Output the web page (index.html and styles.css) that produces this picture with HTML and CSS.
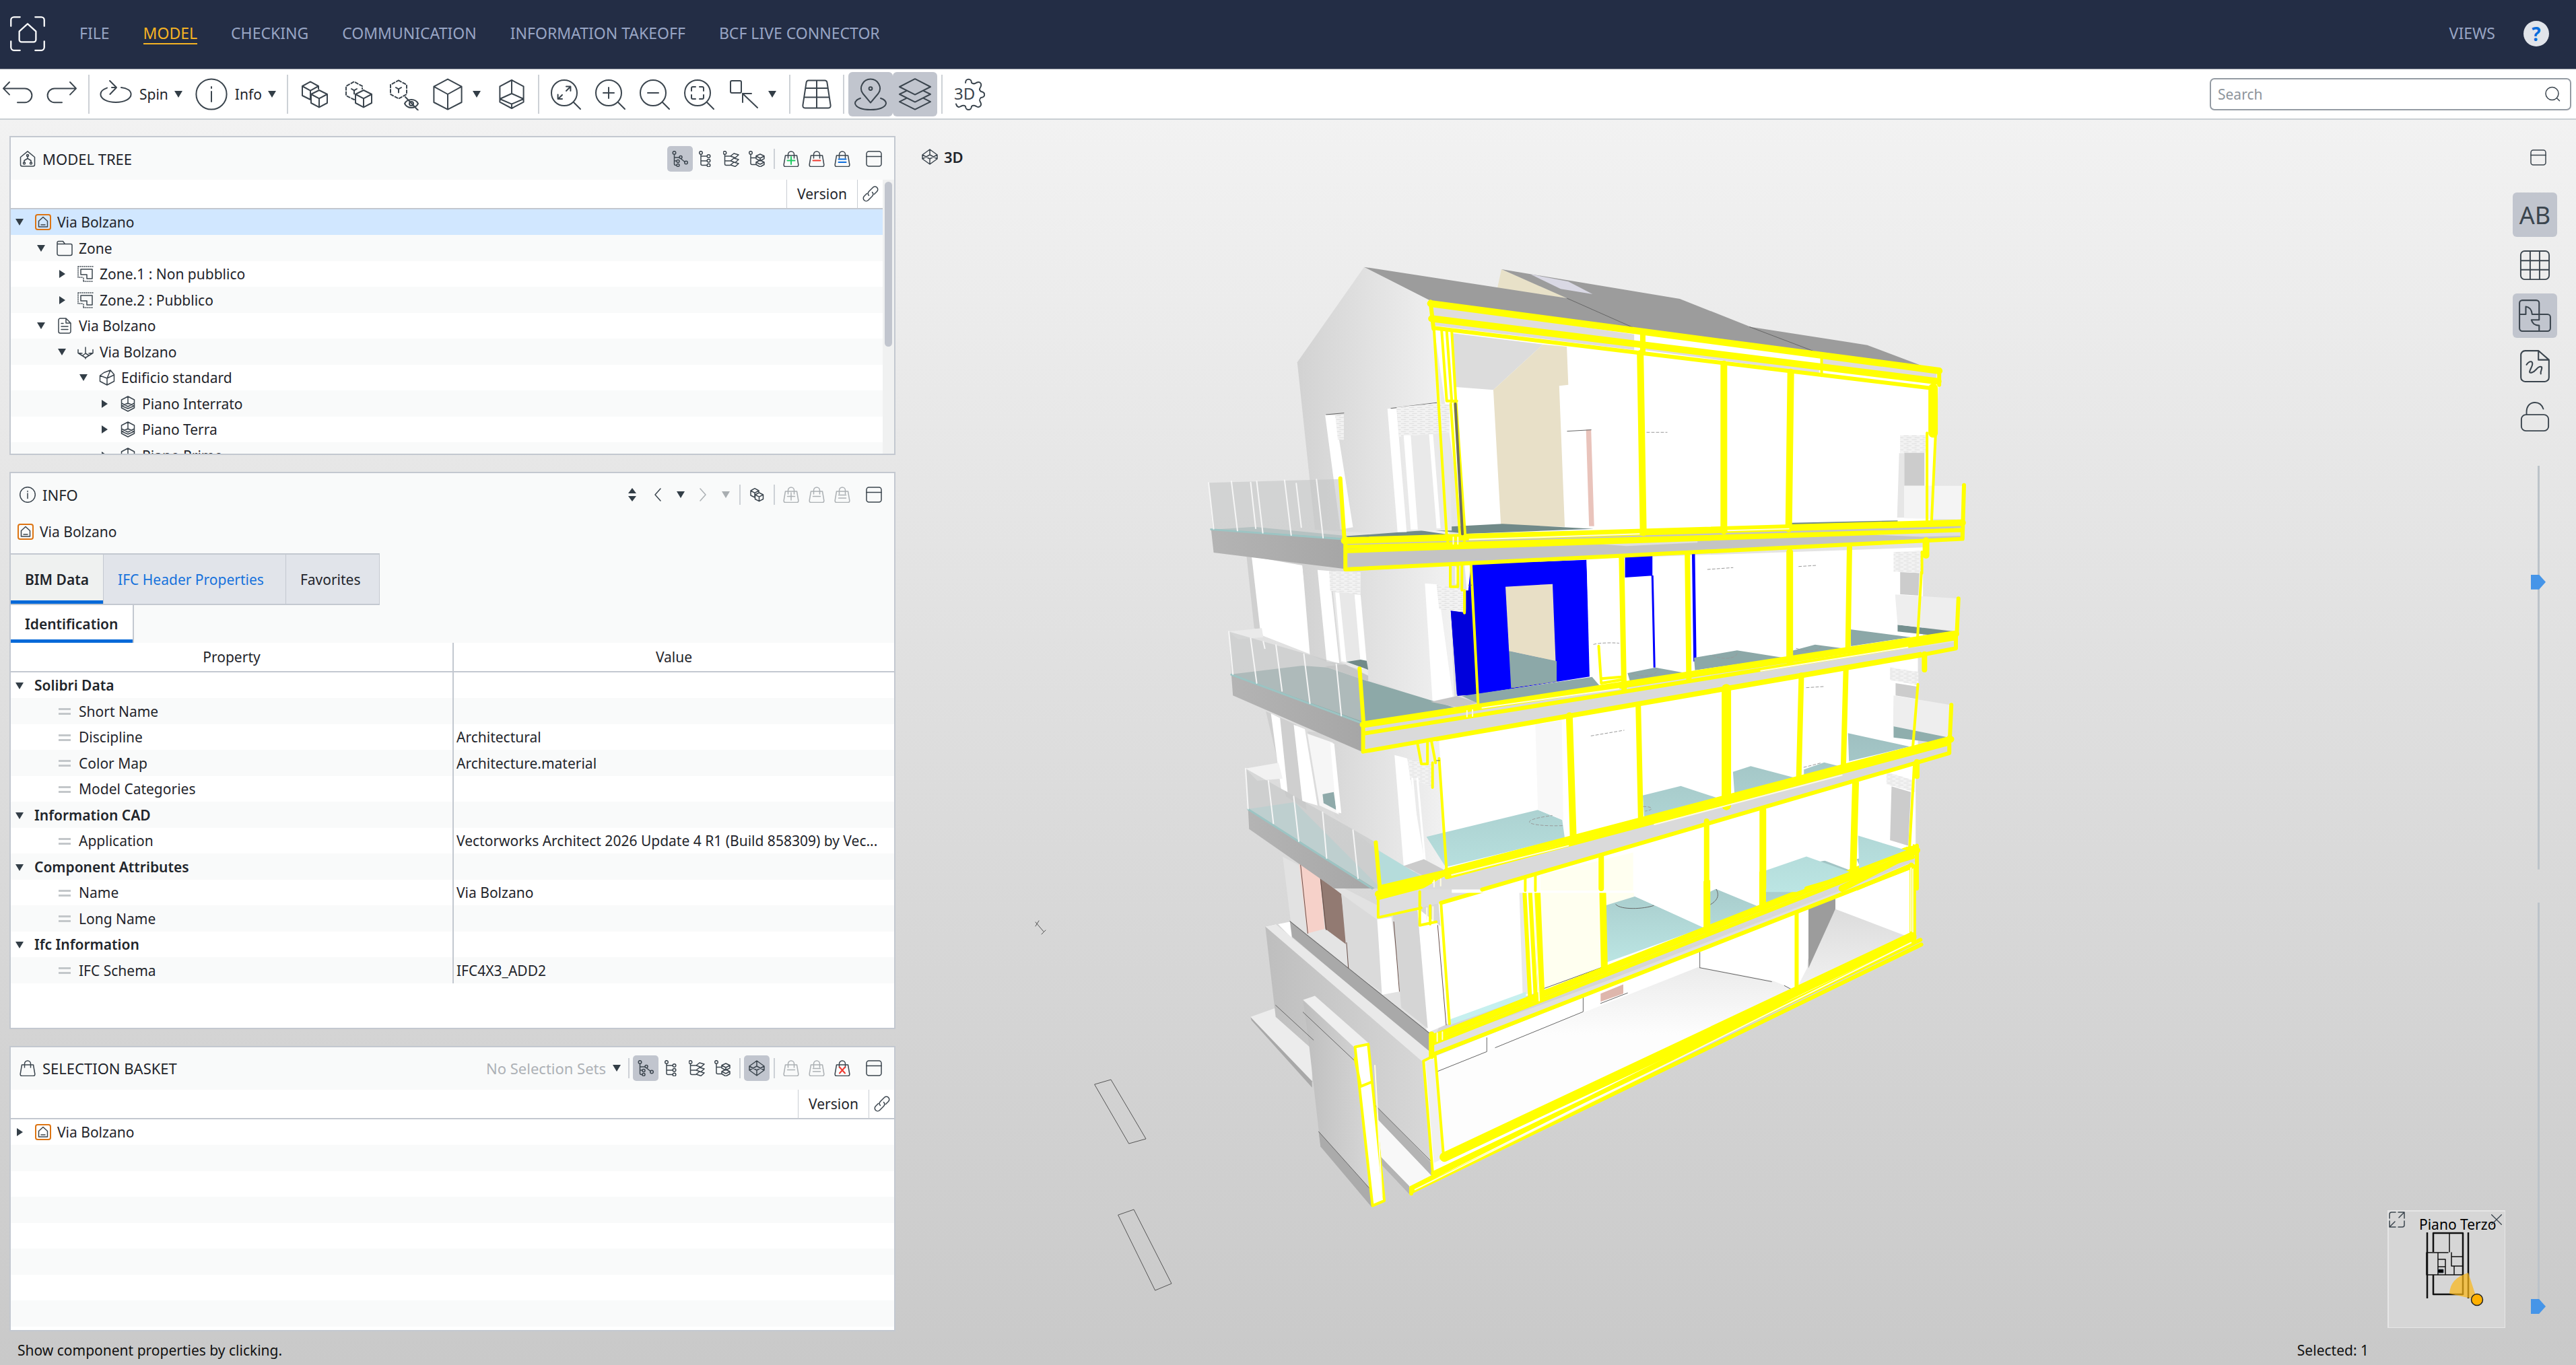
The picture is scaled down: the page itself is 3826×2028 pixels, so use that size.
FILE: index.html
```html
<!DOCTYPE html>
<html lang="en">
<head>
    <meta charset="UTF-8">
    <meta name="viewport" content="width=device-width, initial-scale=1.0">
    <title>Via Bolzano - Model</title>
    <link rel="stylesheet" href="styles.css">
</head>
<body>
    <svg class="sprite" aria-hidden="true">
        <symbol id="i-logo" viewBox="0 0 24 24"><path d="M1 7V3a2 2 0 0 1 2-2h4M17 1h4a2 2 0 0 1 2 2v4M23 17v4a2 2 0 0 1-2 2h-4M7 23H3a2 2 0 0 1-2-2v-4M6.500 10.500L12 5.500l5.500 5V16a1.500 1.500 0 0 1-1.500 1.500H8A1.500 1.500 0 0 1 6.500 16z"/></symbol>
        <symbol id="i-undo" viewBox="0 0 24 24"><path d="M6 3L1.500 7.700 6 12.300M1.500 7.700h16a5.200 5.200 0 0 1 0 10.400H12"/></symbol>
        <symbol id="i-redo" viewBox="0 0 24 24"><path d="M18 3l4.500 4.700L18 12.300M22.500 7.700h-16a5.200 5.200 0 0 0 0 10.400H12"/></symbol>
        <symbol id="i-spin" viewBox="0 0 24 24"><path d="M7.500 2l5 5-4.800 5M12.500 7H9M5.500 7.300C2.500 8.300.7 10 .7 12c0 3.500 5 6 11.300 6s11.300-2.500 11.300-6c0-2.700-3-4.600-7.300-5"/></symbol>
        <symbol id="i-info" viewBox="0 0 24 24"><circle cx="12" cy="12" r="11.300"/><path d="M12 10v7.500M12 6.500v1"/></symbol>
        <symbol id="i-cubes" viewBox="0 0 24 24"><path d="M9 12.500V16l-6-3V6l6-3.300L15 6v2M3 6l6 3.300L15 6M9 9.300v3M15.500 9l6 3v6.500l-6 3.200-6-3.200V12zM9.500 12l6 3.200 6-3.200M15.500 15.200v6.500"/></symbol>
        <symbol id="i-cubes-dash" viewBox="0 0 24 24"><path stroke-dasharray="2.200 1.400" d="M8.500 16l-6-3V6l6-3.300L14.500 6v2"/><path d="M6.500 8l2 1.200 2-1.200M8.500 9.200v2.500M15.500 9l6 3v6.500l-6 3.200-6-3.200V12zM9.500 12l6 3.200 6-3.200M15.500 15.200v6.500"/></symbol>
        <symbol id="i-cube-hide" viewBox="0 0 24 24"><path stroke-dasharray="2.200 1.400" d="M8.500 1.700l6 3.300v7l-6 3.300-6-3.300V5z"/><path d="M6.500 7l2 1.200 2-1.200M8.500 8.200v2.500M13 19c2-4 8-4 10 0-2 4-8 4-10 0zM13.500 14l9.500 10"/><circle cx="18" cy="19" r="1.500"/></symbol>
        <symbol id="i-cube" viewBox="0 0 24 24"><path d="M12 .8l10.300 5.500v11.700L12 23.300 1.700 18V6.300zM1.700 6.300L12 12l10.300-5.700M12 12v11.300"/></symbol>
        <symbol id="i-floor" viewBox="0 0 24 24"><path d="M12 1.500l8.800 4.700v11.600L12 22.500l-8.800-4.700V6.200zM12 1.500V11.500M3.200 15.500l8.800-4 8.800 4M3.200 15.500l8.800 3.800 8.800-3.800M12 19.300v3"/></symbol>
        <symbol id="i-zoom-fit" viewBox="0 0 24 24"><circle cx="11" cy="11" r="9.500"/><path d="M18 18l5 5M12.500 9.500L15.500 6.500M12.500 6.300h3.200v3.200M9.500 12.500l-3 3M6.300 12.300v3.200h3.200"/></symbol>
        <symbol id="i-zoom-in" viewBox="0 0 24 24"><circle cx="11" cy="11" r="9.500"/><path d="M18 18l5 5M11 7v8M7 11h8"/></symbol>
        <symbol id="i-zoom-out" viewBox="0 0 24 24"><circle cx="11" cy="11" r="9.500"/><path d="M18 18l5 5M7 11h8"/></symbol>
        <symbol id="i-zoom-area" viewBox="0 0 24 24"><circle cx="11" cy="11" r="9.500"/><path d="M18 18l5 5M6.500 9.500v-2a1 1 0 0 1 1-1h2M12.500 6.500h2a1 1 0 0 1 1 1v2M15.500 12.500v2a1 1 0 0 1-1 1h-2M9.500 15.500h-2a1 1 0 0 1-1-1v-2"/></symbol>
        <symbol id="i-select" viewBox="0 0 24 24"><rect x="2.500" y="2" width="8" height="9" rx="1"/><path d="M22.500 22L11.500 11.500M11.500 18v-6.500H18"/></symbol>
        <symbol id="i-grid3d" viewBox="0 0 24 24"><path d="M6 1.800h12q1.400 0 1.700 1.400l2.600 17q.2 2-1.600 2H3.300q-1.800 0-1.600-2l2.600-17Q4.600 1.800 6 1.800zM12 1.800v20.400M3.800 7.500h16.400M2.800 14.200h18.400"/></symbol>
        <symbol id="i-pin" viewBox="0 0 24 24"><path d="M12 18.300L6.300 11.500C3 7 6.500.8 12 .8S21 7 17.700 11.500zM4.500 15C1.500 16 .5 17.200.5 18.800 1 22 6 23.500 12 23.500S23 22 23.500 18.800c0-1.600-1-2.800-4-3.800"/><circle cx="12" cy="7.800" r="1.200"/></symbol>
        <symbol id="i-layers" viewBox="0 0 24 24"><path d="M12 .6l11.500 5.900L12 12.300.5 6.500zM6 9.300L.5 12 12 17.800 23.500 12 18 9.300M6 14.800L.5 17.600 12 23.300l11.500-5.700-5.500-2.800"/></symbol>
        <symbol id="i-search" viewBox="0 0 24 24"><circle cx="11.500" cy="11" r="9.500"/><path d="M18.500 17.800l4 4"/></symbol>
        <symbol id="i-window" viewBox="0 0 24 24"><rect x="1" y="1" width="22" height="22" rx="3.500"/><path d="M1 8.500h22"/></symbol>
        <symbol id="i-house-tree" viewBox="0 0 24 24"><path d="M12 .8L22.500 9.500v11a2.500 2.500 0 0 1-2.500 2.500H4a2.500 2.500 0 0 1-2.500-2.500v-11zM12 8v3.500M12 11.500l-5 3v3M12 11.500l5 3v3"/><circle cx="12" cy="7" r="1.500"/><circle cx="7" cy="18.500" r="1.500"/><circle cx="17" cy="18.500" r="1.500"/></symbol>
        <symbol id="i-tree1" viewBox="0 0 24 24"><circle cx="3.500" cy="3" r="2.300"/><path d="M3.500 5.500v14a2 2 0 0 0 2 2h1M3.500 10h7.500M3.500 15h3M13 11.500l6 5"/><circle cx="13" cy="9.500" r="2"/><circle cx="9" cy="15.500" r="2"/><circle cx="21" cy="17.500" r="2.300"/><circle cx="9" cy="21.500" r="2"/></symbol>
        <symbol id="i-tree2" viewBox="0 0 24 24"><circle cx="5" cy="3" r="2.300"/><path d="M5 5.500v14a2 2 0 0 0 2 2h7M5 8h9M5 15h9"/><circle cx="16.500" cy="8" r="2.300"/><circle cx="16.500" cy="14.800" r="2.300"/><circle cx="16.500" cy="21.500" r="2.300"/></symbol>
        <symbol id="i-tree3" viewBox="0 0 24 24"><circle cx="2.500" cy="3" r="2.300"/><path d="M2.500 5.500v14a2 2 0 0 0 2 2h6M2.500 8h8M2.500 15h8M11 8l5-4 7 2-5 4.500zM11 15l5-4 7 2-5 4.500zM11 21l5-4 7 2-5 4.500z"/></symbol>
        <symbol id="i-tree4" viewBox="0 0 24 24"><circle cx="3" cy="3" r="2.300"/><path d="M3 5.500v13a2 2 0 0 0 2 2h6M3 10.500h8M17 5l6 2.800v4L17 15l-6-3.200v-4zM11 8l6 3 6-3M17 11v4M17 14l6 3v3.500L17 24l-6-3.500V17zM11 17l6 3 6-3"/></symbol>
        <symbol id="i-bag" viewBox="0 0 24 24"><path d="M3.500 7h17l2.300 13.500q.2 3-2.300 3h-17q-2.500 0-2.300-3zM7.500 11V5.500a4.500 4.500 0 0 1 9 0V11"/></symbol>
        <symbol id="i-house" viewBox="0 0 24 24"><rect class="house-box" x="1" y="1" width="22" height="22" rx="3"/><path d="M12 4.500l6.500 6V19h-13v-8.500zM9 16h6"/></symbol>
        <symbol id="i-link" viewBox="0 0 24 24"><path d="M9.500 14.500a4.500 4.500 0 0 1 0-6l6-6a4.200 4.200 0 0 1 6 6l-4 4M14.500 9.500a4.500 4.500 0 0 1 0 6l-6 6a4.200 4.200 0 0 1-6-6l4-4"/></symbol>
        <symbol id="i-folder" viewBox="0 0 24 24"><path d="M1 20V3.500A2 2 0 0 1 3 1.500h6.500l3 4H21a2 2 0 0 1 2 2V20a2.500 2.500 0 0 1-2.500 2.500h-17A2.500 2.500 0 0 1 1 20zM1 5.500h11"/></symbol>
        <symbol id="i-zone" viewBox="0 0 24 24"><path stroke-dasharray="1 2" d="M1 1h22M1 1v16h7M9 23h13M9 18v5"/><path d="M5 5h17v14h-8v-6H5z"/></symbol>
        <symbol id="i-file" viewBox="0 0 24 24"><path d="M14 1H5.500A2.500 2.500 0 0 0 3 3.500v17A2.500 2.500 0 0 0 5.500 23h13a2.500 2.500 0 0 0 2.500-2.500V8zM14 1v7h7M7 13h10M7 17.500h10M7 8.500h3"/></symbol>
        <symbol id="i-site" viewBox="0 0 24 24"><path d="M1 8.500v5l11 7 11-7v-5M1 13.500l6 .5M12 5v9l-4 3M12 14l5 3M12 20v2M17 14l6-.5"/></symbol>
        <symbol id="i-building" viewBox="0 0 24 24"><path d="M1.500 9l6-4.500L17 1l5.500 6.500v10L12 23 1.500 17.500zM1.500 9L12 13l5-12M12 13v10M12 13l10.500-5"/></symbol>
        <symbol id="i-storey" viewBox="0 0 24 24"><path d="M12 1l9.500 5v12L12 23l-9.500-5V6zM12 1v11M2.500 15l9.500-4 9.500 4M2.500 15l9.500 4 9.500-4M2.500 11l9.500 5 9.500-5"/></symbol>
        <symbol id="i-sphere" viewBox="0 0 24 24"><path d="M12 1l11 8v6l-11 8L1 15V9zM1 9l11 6 11-6M1 15l11-6 11 6M12 1v8M12 15v8"/></symbol>
        <symbol id="i-sort" viewBox="0 0 24 24"><path class="solid" d="M12 2l6 8H6zM12 22l-6-8h12z"/></symbol>
        <symbol id="i-left" viewBox="0 0 24 24"><path d="M16 3l-8 9 8 9"/></symbol>
        <symbol id="i-right" viewBox="0 0 24 24"><path d="M8 3l8 9-8 9"/></symbol>
        <symbol id="i-caret" viewBox="0 0 14 14"><path class="solid" d="M1 2h12L7 12z"/></symbol>
        <symbol id="i-caret-right" viewBox="0 0 14 14"><path class="solid" d="M3 1v12l9-6z"/></symbol>
        <symbol id="i-grid" viewBox="0 0 24 24"><rect x="1" y="1" width="22" height="22" rx="3"/><path d="M8.300 1v22M15.600 1v22M1 8.500h22M1 15.500h22"/></symbol>
        <symbol id="i-rooms" viewBox="0 0 24 24"><path d="M1 11V3a2 2 0 0 1 2-2h10a2 2 0 0 1 2 2v8h6a2 2 0 0 1 2 2v8a2 2 0 0 1-2 2H3a2 2 0 0 1-2-2V11h4.500V5.500Q9.500 6 10 11H15v4H9.500q1 4 5.500 4v4"/></symbol>
        <symbol id="i-sketch" viewBox="0 0 24 24"><path d="M14.500 1H5a3 3 0 0 0-3 3v16a3 3 0 0 0 3 3h14a3 3 0 0 0 3-3V7.500zM14.500 1v6.500H22M6 11c2.500-3.500 5-2.500 4 .5s-3.500 6 0 5c3-1 4-5 6.500-4 1.500.8-1 3-.3 5"/></symbol>
        <symbol id="i-lock" viewBox="0 0 24 24"><rect x="1.500" y="10.500" width="21" height="12.500" rx="3.500"/><path d="M5.500 10.500V8.500C5.500 3.500 8.500 1 12 1c3.200 0 5.500 2 6.500 5"/></symbol>
        <symbol id="i-expand" viewBox="0 0 24 24"><path d="M1 10V4a3 3 0 0 1 3-3h6M14 1h9v9M23 1l-8 8M23 14v6a3 3 0 0 1-3 3h-6M10 23H1v-9M1 23l8-8"/></symbol>
        <symbol id="i-close" viewBox="0 0 24 24"><path d="M1 1l22 22M23 1L1 23"/></symbol>
    </svg>

    <header class="header">
        <svg class="logo"><use href="#i-logo"/></svg>
        <nav class="nav">
            <a class="nav-link" href="#">FILE</a>
            <a class="nav-link active" href="#">MODEL</a>
            <a class="nav-link" href="#">CHECKING</a>
            <a class="nav-link" href="#">COMMUNICATION</a>
            <a class="nav-link" href="#">INFORMATION TAKEOFF</a>
            <a class="nav-link" href="#">BCF LIVE CONNECTOR</a>
        </nav>
        <a class="nav-link views" href="#">VIEWS</a>
        <button class="help" aria-label="Help">?</button>
    </header>

    <div class="toolbar">
        <button class="tool tool-edge" aria-label="Undo"><svg class="icon"><use href="#i-undo"/></svg></button>
        <button class="tool" aria-label="Redo"><svg class="icon"><use href="#i-redo"/></svg></button>
        <span class="sep"></span>
        <button class="tool tool-text"><svg class="icon"><use href="#i-spin"/></svg><span>Spin</span><svg class="caret"><use href="#i-caret"/></svg></button>
        <button class="tool tool-text"><svg class="icon"><use href="#i-info"/></svg><span>Info</span><svg class="caret"><use href="#i-caret"/></svg></button>
        <span class="sep"></span>
        <button class="tool" aria-label="Show all"><svg class="icon"><use href="#i-cubes"/></svg></button>
        <button class="tool" aria-label="Show only"><svg class="icon"><use href="#i-cubes-dash"/></svg></button>
        <button class="tool" aria-label="Hide"><svg class="icon"><use href="#i-cube-hide"/></svg></button>
        <button class="tool tool-menu" aria-label="Render mode"><svg class="icon"><use href="#i-cube"/></svg><svg class="caret"><use href="#i-caret"/></svg></button>
        <button class="tool" aria-label="Floor"><svg class="icon"><use href="#i-floor"/></svg></button>
        <span class="sep"></span>
        <button class="tool" aria-label="Zoom to fit"><svg class="icon"><use href="#i-zoom-fit"/></svg></button>
        <button class="tool" aria-label="Zoom in"><svg class="icon"><use href="#i-zoom-in"/></svg></button>
        <button class="tool" aria-label="Zoom out"><svg class="icon"><use href="#i-zoom-out"/></svg></button>
        <button class="tool" aria-label="Zoom to area"><svg class="icon"><use href="#i-zoom-area"/></svg></button>
        <button class="tool tool-menu" aria-label="Select"><svg class="icon"><use href="#i-select"/></svg><svg class="caret"><use href="#i-caret"/></svg></button>
        <span class="sep"></span>
        <button class="tool" aria-label="Grid"><svg class="icon"><use href="#i-grid3d"/></svg></button>
        <span class="sep"></span>
        <button class="tool on" aria-label="Minimap"><svg class="icon"><use href="#i-pin"/></svg></button>
        <button class="tool on" aria-label="Layers"><svg class="icon"><use href="#i-layers"/></svg></button>
        <span class="sep"></span>
        <button class="tool" aria-label="3D settings"><svg class="icon" viewBox="0 0 24 24"><path d="M9.500 3.500C9.500 0 14 0 14 3.500c1.500 1.200 2.500.8 3.500 0 3-1.500 4.500 1 3 3.500-1 1.500-.5 2 .5 3 3.500.7 3.500 4 0 4.500-1 1-1.500 1.700-.5 3.200 1.500 2.500-.5 4.800-3 3.300-1.500-.8-2.300-1-3.500 0C14 24.300 9.500 24.300 9.500 21c-1.200-1-2-.8-3.500 0-1.500 1-3 .3-3.500-1.800"/><text class="gear-text" x="1" y="16.200">3D</text></svg></button>
        <label class="search">
            <input type="text" placeholder="Search" aria-label="Search">
            <svg class="icon-sm"><use href="#i-search"/></svg>
        </label>
    </div>

    <div class="workspace">
        <aside class="sidebar">
            <section class="panel">
                <div class="panel-header">
                    <svg class="icon-sm"><use href="#i-house-tree"/></svg>
                    <h2 class="panel-title">MODEL TREE</h2>
                    <button class="mini on" aria-label="Containment"><svg class="icon-sm"><use href="#i-tree1"/></svg></button>
                    <button class="mini" aria-label="Components"><svg class="icon-sm"><use href="#i-tree2"/></svg></button>
                    <button class="mini" aria-label="Layers"><svg class="icon-sm"><use href="#i-tree3"/></svg></button>
                    <button class="mini" aria-label="Systems"><svg class="icon-sm"><use href="#i-tree4"/></svg></button>
                    <span class="sep-sm"></span>
                    <button class="mini" aria-label="Add to basket"><svg class="icon-sm" viewBox="0 0 24 24"><use href="#i-bag"/><path class="green" d="M12 9v11M6.500 14.500h11"/></svg></button>
                    <button class="mini" aria-label="Remove from basket"><svg class="icon-sm" viewBox="0 0 24 24"><use href="#i-bag"/><path class="red" d="M6.500 14.500h11"/></svg></button>
                    <button class="mini" aria-label="Set basket"><svg class="icon-sm" viewBox="0 0 24 24"><use href="#i-bag"/><path class="blue" d="M6.500 12.500h11M6.500 17h11"/></svg></button>
                    <button class="mini collapse" aria-label="Collapse"><svg class="icon-sm"><use href="#i-window"/></svg></button>
                </div>
                <div class="panel-body">
                    <table class="tree">
                        <thead>
                            <tr><th></th><th class="col-version">Version</th><th class="col-link"><svg class="icon-sm"><use href="#i-link"/></svg></th></tr>
                        </thead>
                        <tbody>
                            <tr class="selected"><td colspan="3"><div class="node"><svg class="caret"><use href="#i-caret"/></svg><svg class="icon-sm"><use href="#i-house"/></svg>Via Bolzano</div></td></tr>
                            <tr><td colspan="3"><div class="node level-1"><svg class="caret"><use href="#i-caret"/></svg><svg class="icon-sm"><use href="#i-folder"/></svg>Zone</div></td></tr>
                            <tr><td colspan="3"><div class="node level-2"><svg class="caret"><use href="#i-caret-right"/></svg><svg class="icon-sm"><use href="#i-zone"/></svg>Zone.1 : Non pubblico</div></td></tr>
                            <tr><td colspan="3"><div class="node level-2"><svg class="caret"><use href="#i-caret-right"/></svg><svg class="icon-sm"><use href="#i-zone"/></svg>Zone.2 : Pubblico</div></td></tr>
                            <tr><td colspan="3"><div class="node level-1"><svg class="caret"><use href="#i-caret"/></svg><svg class="icon-sm"><use href="#i-file"/></svg>Via Bolzano</div></td></tr>
                            <tr><td colspan="3"><div class="node level-2"><svg class="caret"><use href="#i-caret"/></svg><svg class="icon-sm"><use href="#i-site"/></svg>Via Bolzano</div></td></tr>
                            <tr><td colspan="3"><div class="node level-3"><svg class="caret"><use href="#i-caret"/></svg><svg class="icon-sm"><use href="#i-building"/></svg>Edificio standard</div></td></tr>
                            <tr><td colspan="3"><div class="node level-4"><svg class="caret"><use href="#i-caret-right"/></svg><svg class="icon-sm"><use href="#i-storey"/></svg>Piano Interrato</div></td></tr>
                            <tr><td colspan="3"><div class="node level-4"><svg class="caret"><use href="#i-caret-right"/></svg><svg class="icon-sm"><use href="#i-storey"/></svg>Piano Terra</div></td></tr>
                            <tr><td colspan="3"><div class="node level-4"><svg class="caret"><use href="#i-caret-right"/></svg><svg class="icon-sm"><use href="#i-storey"/></svg>Piano Primo</div></td></tr>
                        </tbody>
                    </table>
                    <div class="scrollbar"><div class="scroll-thumb"></div></div>
                </div>
            </section>

            <section class="panel">
                <div class="panel-header">
                    <svg class="icon-sm"><use href="#i-info"/></svg>
                    <h2 class="panel-title">INFO</h2>
                    <button class="mini" aria-label="Sort"><svg class="icon-sm"><use href="#i-sort"/></svg></button>
                    <button class="mini" aria-label="Back"><svg class="icon-sm"><use href="#i-left"/></svg></button>
                    <button class="mini narrow" aria-label="Back list"><svg class="caret"><use href="#i-caret"/></svg></button>
                    <button class="mini off" aria-label="Forward"><svg class="icon-sm"><use href="#i-right"/></svg></button>
                    <button class="mini narrow off" aria-label="Forward list"><svg class="caret"><use href="#i-caret"/></svg></button>
                    <span class="sep-sm"></span>
                    <button class="mini" aria-label="Show"><svg class="icon-sm"><use href="#i-cubes"/></svg></button>
                    <span class="sep-sm"></span>
                    <button class="mini off" aria-label="Add to basket"><svg class="icon-sm" viewBox="0 0 24 24"><use href="#i-bag"/><path d="M12 9v11M6.500 14.500h11"/></svg></button>
                    <button class="mini off" aria-label="Remove from basket"><svg class="icon-sm" viewBox="0 0 24 24"><use href="#i-bag"/><path d="M6.500 14.500h11"/></svg></button>
                    <button class="mini off" aria-label="Set basket"><svg class="icon-sm" viewBox="0 0 24 24"><use href="#i-bag"/><path d="M6.500 12.500h11M6.500 17h11"/></svg></button>
                    <button class="mini collapse" aria-label="Collapse"><svg class="icon-sm"><use href="#i-window"/></svg></button>
                </div>
                <div class="info-name"><svg class="icon-sm"><use href="#i-house"/></svg>Via Bolzano</div>
                <div class="tabs">
                    <button class="tab active">BIM Data</button>
                    <button class="tab tab-link">IFC Header Properties</button>
                    <button class="tab">Favorites</button>
                </div>
                <div class="subtabs"><button class="subtab">Identification</button></div>
                <div class="info-body">
                    <table class="props">
                        <thead>
                            <tr><th>Property</th><th>Value</th></tr>
                        </thead>
                        <tbody>
                            <tr><td class="group"><svg class="caret"><use href="#i-caret"/></svg>Solibri Data</td><td></td></tr>
                            <tr><td class="prop"><i class="bars"></i>Short Name</td><td></td></tr>
                            <tr><td class="prop"><i class="bars"></i>Discipline</td><td>Architectural</td></tr>
                            <tr><td class="prop"><i class="bars"></i>Color Map</td><td>Architecture.material</td></tr>
                            <tr><td class="prop"><i class="bars"></i>Model Categories</td><td></td></tr>
                            <tr><td class="group"><svg class="caret"><use href="#i-caret"/></svg>Information CAD</td><td></td></tr>
                            <tr><td class="prop"><i class="bars"></i>Application</td><td>Vectorworks Architect 2026 Update 4 R1 (Build 858309) by Vec...</td></tr>
                            <tr><td class="group"><svg class="caret"><use href="#i-caret"/></svg>Component Attributes</td><td></td></tr>
                            <tr><td class="prop"><i class="bars"></i>Name</td><td>Via Bolzano</td></tr>
                            <tr><td class="prop"><i class="bars"></i>Long Name</td><td></td></tr>
                            <tr><td class="group"><svg class="caret"><use href="#i-caret"/></svg>Ifc Information</td><td></td></tr>
                            <tr><td class="prop"><i class="bars"></i>IFC Schema</td><td>IFC4X3_ADD2</td></tr>
                        </tbody>
                    </table>
                </div>
            </section>

            <section class="panel">
                <div class="panel-header">
                    <svg class="icon-sm"><use href="#i-bag"/></svg>
                    <h2 class="panel-title">SELECTION BASKET</h2>
                    <label class="sets">
                        <select aria-label="Selection sets"><option>No Selection Sets</option></select>
                        <svg class="caret"><use href="#i-caret"/></svg>
                    </label>
                    <span class="sep-sm"></span>
                    <button class="mini on" aria-label="Containment"><svg class="icon-sm"><use href="#i-tree1"/></svg></button>
                    <button class="mini" aria-label="Components"><svg class="icon-sm"><use href="#i-tree2"/></svg></button>
                    <button class="mini" aria-label="Layers"><svg class="icon-sm"><use href="#i-tree3"/></svg></button>
                    <button class="mini" aria-label="Systems"><svg class="icon-sm"><use href="#i-tree4"/></svg></button>
                    <span class="sep-sm"></span>
                    <button class="mini on" aria-label="Show in 3D"><svg class="icon-sm"><use href="#i-sphere"/></svg></button>
                    <span class="sep-sm"></span>
                    <button class="mini off" aria-label="Remove"><svg class="icon-sm" viewBox="0 0 24 24"><use href="#i-bag"/><path d="M6.500 14.500h11"/></svg></button>
                    <button class="mini off" aria-label="Set"><svg class="icon-sm" viewBox="0 0 24 24"><use href="#i-bag"/><path d="M6.500 12.500h11M6.500 17h11"/></svg></button>
                    <button class="mini" aria-label="Clear"><svg class="icon-sm" viewBox="0 0 24 24"><use href="#i-bag"/><path class="red" d="M8 10.500l8 9M16 10.500l-8 9"/></svg></button>
                    <button class="mini collapse" aria-label="Collapse"><svg class="icon-sm"><use href="#i-window"/></svg></button>
                </div>
                <div class="panel-body">
                    <table class="tree">
                        <thead>
                            <tr><th></th><th class="col-version">Version</th><th class="col-link"><svg class="icon-sm"><use href="#i-link"/></svg></th></tr>
                        </thead>
                        <tbody>
                            <tr><td colspan="3"><div class="node"><svg class="caret"><use href="#i-caret-right"/></svg><svg class="icon-sm"><use href="#i-house"/></svg>Via Bolzano</div></td></tr>
                            <tr><td colspan="3"></td></tr>
                            <tr><td colspan="3"></td></tr>
                            <tr><td colspan="3"></td></tr>
                            <tr><td colspan="3"></td></tr>
                            <tr><td colspan="3"></td></tr>
                            <tr><td colspan="3"></td></tr>
                            <tr><td colspan="3"></td></tr>
                        </tbody>
                    </table>
                </div>
            </section>
        </aside>

        <main class="viewport">
            <svg class="scene" viewBox="1344 178 2482 1800" aria-label="Building section">
                <defs>
                    <linearGradient id="wall"><stop offset="0" stop-color="#d2d2d2"/><stop offset="1" stop-color="#f2f2f2"/></linearGradient>
                    <linearGradient id="slab"><stop offset="0" stop-color="#b4b4b4"/><stop offset="1" stop-color="#a6a6a6"/></linearGradient>
                    <linearGradient id="ground"><stop offset="0" stop-color="#bebebe"/><stop offset="1" stop-color="#d8d8d8"/></linearGradient>
                    <linearGradient id="cellar" x2="0" y2="1"><stop offset="0" stop-color="#dcdcdc"/><stop offset=".5" stop-color="#fdfdfd"/></linearGradient>
                    <linearGradient id="water" x2="0" y2="1"><stop offset="0" stop-color="#9fc0c1"/><stop offset="1" stop-color="#bbe5e3"/></linearGradient>
                    <pattern id="mesh" width="16" height="18" patternUnits="userSpaceOnUse"><rect width="16" height="18" fill="#f2f2f2"/><path d="M0 4h9M6 13h9" stroke="#cfcfcf" stroke-width="1"/></pattern>
                </defs>

                <!-- ground marks -->
                <path class="mark" d="M1626 1611l24-7 52 88-25 7zM1661 1805l23-8 56 110-24 10zM1538 1370l12 14M1538 1376l5-8M1547 1388l6-6"/>

                <!-- ground floor and cellar -->
                <g transform="translate(1800 1280) scale(.7015 .3444)">
                    <path fill="#ececec" d="M82 670l52-38 78 140v190z"/>
                    <path fill="#a8a8a8" d="M82 672l130 275v28L84 685z"/>
                    <path fill="#e2e2e2" d="M150 -20l230 240 100 50v450l-10 40L170 310z"/>
                    <path fill="#f6d1c9" d="M184 0l45 70 10 230-37 12z"/>
                    <path fill="#927a72" d="M229 70l45 70 12 220-46-70z"/>
                    <path fill="#e4e4e4" d="M202 310l37-20 46 70 4 100z"/>
                    <path fill="#dadada" d="M274 140l75 110 15 320-76-110z"/>
                    <path fill="#fff" d="M350 250l30-10 20 320-40 15zM435 200l50 80 15 420-45 40z"/>
                    <path fill="#d5d5d5" d="M383 230l52 -20 22 510-56-90z"/>
                    <path fill="#a9a9a9" d="M165 255L465 745v90L170 325z"/>
                    <path fill="#fff" d="M140 270l25-10 4 70z"/>
                    <path fill="url(#ground)" d="M113 280l20-10L465 830v520L345 1050 135 670z"/>
                    <path fill="#e9e9e9" d="M113 280l22-10L472 838l-28 22z"/>
                    <path fill="#f8f8f8" d="M350 1100l118 250-50 60-60-135z"/>
                    <path fill="#b4b4b4" d="M345 1050l120 250v55L350 1110zM358 1275l60 125v35L360 1310z"/>
                    <path fill="url(#ground)" d="M193 600l107 200 45 680L230 1230 205 780z"/>
                    <path fill="#ababab" d="M226 1165l110 250 2 75L230 1230z"/>
                    <path fill="#efefef" d="M193 597l25-18 114 205-32 15z"/>
                    <path fill="#fff" d="M303 800l28-15 35 675-25 25z"/>
                    <path fill="#fff" d="M447 860L1485 20v320L425 1430l45-70z"/>
                    <path fill="url(#cellar)" d="M478 900L1030 455l170 60 50-50 70-260 155 120L492 1290z"/>
                    <path fill="#fff" d="M1033 390l205-165v330l-50-40-155-60z"/>
                    <path fill="#fff" d="M1320 140l155-130v310l-155-115zM1240 220l30-20-10 260-20 80z"/>
                    <path fill="#9c9c9c" d="M1263 200l57-45v50l-57 255z"/>
                    <path fill="#deb6ac" d="M823 570l48-40v40l-48 35z"/>
                    <path fill="#f0f0f0" d="M452 860l20-10 18 430-20 20z"/>
                    <path fill="#fff" d="M480 180L1490 -400v350L1000 340 500 700z"/>
                    <path fill="#dedede" d="M352 165L1485-470v60L785 0 485 178 440 200l-85 38z"/>
                    <path fill="#e1e1e1" d="M468 785L830 520 1490 0 1490 25 830 545 465 835z"/>
                    <path fill="#e9e9e9" d="M650 90h12l8 480-12 6z"/>
                    <path fill="#fffff0" d="M690 60l130-60 12 455-130 95zM825-60h64l5 220-62 28z"/>
                    <path fill="url(#water)" d="M832 190l64-40 145 135-205 150zM1055 130l12-12 95 80-107 75zM1172 50l60-55h64l58 45-182 145zM1365-10l50-30 40 20-80 55z"/>
                    <path fill="#c6f0ef" d="M505 680l160-118v25L505 705z"/>
                    <path fill="#fff" d="M897 0h147v285L895 150zM1055 0h105v195l-95-80-10 15zM1175 0h65l-68 45z"/>
                    <path class="thin" d="M165 258l300 490M135 620l80 150M193 650l112 215M226 1165l110 250M345 1050l120 245M478 905l104-85 v-60M600 803l186-155v-60M823 612l57-45M1033 458l152 60M1033 390v68M1212 535l16 18M855 185c10 25 60 20 80 5M1068 120c8 30 0 50-12 65M700 550l125-93"/>
                    <path class="rust" d="M187 0l16 310M230 75l12 220M285 350l4 110M385 260l12 300M478 275l18 430"/>
                    <path class="y4" d="M303 800l28-12 34 675-25 22zM303 850l12 120 22-18M468 840l-20 20 20 500M473 840l17 420M440 130v145l35-15M462 190v80M485 180l18 520M355 240L443 200M352 150v90M1480 10v310M1488 20v320"/>
                    <path class="y5" d="M422 1425L1502 358M422 1432v-25L1480 325M468 1345L1500 338M465 835L1485 20M467 785L1485-35M352 158L470 95M485 178L785 0"/>
                    <path class="y14" d="M492 1275L1482 325"/>
                    <path class="y9" d="M467 760L1485-60M352 140L620 0"/>
                    <path class="y5" d="M660 60l14 545M672 60l14 545M684 60l16 530M1238 225v325"/>
                    <path class="y9" d="M687 60l10 490M826 0l5 470M1048 0v300M1166 0v205"/>
                    <path class="y7" d="M1358 -60v100M465 745v95"/>
                    <path class="white" d="M477 740v35M488 735v32M468 90v20M480 80v22M680 70l13 530M345 880l15 560M430 1415L1480 350M1480 20v280M455 200v50M468 195v60"/>
                </g>

                <!-- second, first and ground storeys -->
                <g transform="translate(1780 820) scale(.7525 .3333)">
                    <path fill="#d0d0d0" d="M95 20l15 320 110 100-10-400z"/>
                    <path fill="#fff" d="M105 20l100 40 20 400-102-90z"/>
                    <path fill="url(#wall)" d="M205 50l290 10 10 600-50 10L220 460z"/>
                    <path fill="#fff" d="M235 80l23 5 20 410-25-5zM447 140l25 5 30 500-40 20z"/>
                    <path fill="#e8e8e8" d="M265 170l55 20 15 360-55-60z"/>
                    <path fill="url(#mesh)" d="M258 85l62 5v100l-60-15z"/>
                    <path fill="#fff" d="M308 190l12 2 13 330-12-3zM270 180l8 2 14 310-10-5z"/>
                    <path fill="#718a89" d="M292 490l28-10 12 5 3 40z"/>
                    <path fill="#cfcfcf" d="M133 710l60 60 20 380-40-60z"/>
                    <path fill="#fff" d="M143 720l18 20 15 330-13-15zM188 770l22 20 25 340-30-20z"/>
                    <path fill="url(#wall)" d="M215 800l265 40 15 600-90-20L270 1180z"/>
                    <path fill="#f6f6f6" d="M215 810l50 40 12 320-38-40z"/>
                    <path fill="#8faaaa" d="M245 1080l22-10 5 80-25-30z"/>
                    <path fill="#fff" d="M260 850l8 5 14 310-10-5zM387 905l25 15 35 470-42 10z"/>
                    <path fill="url(#mesh)" d="M413 925l50 20v100l-45-30z"/>
                    <path class="thinw" d="M422 1010l15 370M432 1010l15 370"/>

                    <path fill="#fff" d="M525 50L1430-20v430L550 680z"/>
                    <path fill="#fff" d="M475 840L1420 450v480L490 1430z"/>
                    <path fill="#fff" d="M500 1450L1410 940v370L860 1520H500z"/>
                    <path fill="#fffff0" d="M675 1440l183-100v170H675z"/>
                    <path fill="#00f" d="M538 55l228-20 8 520-240 85-24-5-12-375 30 10z"/>
                    <path fill="#0000dc" d="M498 262l30 10v-100h8l15 460-40 10z"/>
                    <path fill="url(#mesh)" d="M470 145l57 25v100l-52-15z"/>
                    <path fill="#e8dfc6" d="M606 155l93-12 6 345-92-45z"/>
                    <path fill="#fff" d="M766 35l66-10v560l-60-25z"/>
                    <path fill="#00f" d="M842 22l54-6v90l-54 8zM894 105h4l4 410h-4zM974 8h6l3 480h-6z"/>
                    <path fill="#8ca8a8" d="M613 442l94 45v90l-90 30zM520 642l257-85 15 40-235 85zM847 540l55-25 60 25-110 40zM978 472l85-33 92 33-175 55zM1172 440l45-27 55 17-98 35zM1286 345l120 35-118 40z"/>
                    <path fill="#748f8e" d="M1380 325l112 30-50 15-62-15z"/>
                    <path fill="url(#water)" d="M450 1270l220-120 48 45 5 80-235 130zM750 1265l110-70 8 10-100 65zM877 1085l75-42 78 58-150 90zM1055 980l35-25 88 52-120 70zM1195 970l40-32 32 18-72 40zM1282 808l122 60-120 65zM1120 1420l80-62 85 68-105 90h-60zM1302 1265l95 65-93 80z"/>
                    <path fill="#8faead" d="M1372 772l110 50-40 25-70-20z"/>
                    <path fill="#f8f8f8" d="M665 770l52-20 3 445-50-45z"/>
                    <path fill="#eee" d="M1375 190l125 18v145l-120-28zM1372 640l112 42-3 145-110-50z"/>
                    <path fill="#ccc" d="M1385 90l38 4-2 100-36-5zM1376 585l42 15-2 55-40-15zM1368 1045l38 25-5 240-36-25z"/>
                    <path fill="url(#mesh)" d="M1372 0l56-5v100l-56-8zM1365 515l56 20v60l-56-25zM1358 980l56 40v50l-56-35z"/>

                    <path fill="#8da9a8" d="M65 545l140-38 50 8 78 60 172 118-180 72z"/>
                    <path fill="#c5c5c5" d="M250 510l40-8 45 50v25zM458 668l52-25 42 30-40 20z"/>
                    <path fill="#eaeaea" d="M60 355l65-15 3 40-50 10z"/>
                    <path class="glass" d="M60 355l260 170 8 235L65 545z"/>
                    <path fill="url(#slab)" d="M65 548l262 222v125L68 640z"/>
                    <path fill="#dadada" d="M325 780L1495 400v30L330 890z"/>
                    <path fill="#b5dcdb" d="M355 1330l95 130-90 40zM100 1145l90-30 170 385h-20z"/>
                    <path fill="#cbcbcb" d="M405 1400l40-30 50 60-40 25z"/>
                    <path fill="#f2f2f2" d="M93 965l65-25 8 70-50 10z"/>
                    <path class="glass" d="M93 965l257 330 10 205h-20L98 1145z"/>
                    <path fill="url(#slab)" d="M98 1147l250 353h-80L100 1235z"/>
                    <path fill="#dadada" d="M490 1440L1480 860v40L560 1505h-120z"/>
                    <path class="teal" d="M65 547l262 220M98 1147l245 353"/>
                    <path class="post" d="M60 355l8 190M103 385l12 200M153 415l12 205M208 455l12 220M272 500l10 230M128 400l3 30M93 965l5 180M138 1020l10 190M188 1090l10 200M245 1160l8 205M305 1240l10 215"/>
                    <path class="thin dim" d="M780 412c15-8 40-8 50-5M1005 78l50-8M1185 65l35-5M775 820l65-25M1200 605l35-5M620 605l90-28M855 540c15 20 50 20 52-20M1015 462c20 20 45 15 48-10M1180 430c20 15 45 15 48-10M718 1220c-60 5-100-20-20-45M790 1235l55-30M1195 960l35-20M878 1135c20 0 22 15 4 20"/>
                    <path class="y9" d="M325 770L1495 365M490 1425L1485 835M360 1500L490 1430M1270 1500L1418 1330"/>
                    <path class="y5" d="M290 75L1445-60M325 785v105L1425 455M325 810L1495 385M1495 360v70L1430 458M470 835L1430 460M560 1505L1482 897V825M1200 1500L1410 1360M490 1450L1480 855M1418 1310v190M1408 1395L1300 1500M1500 208l-3 150M1486 682l-3 150M318 520l8 250M350 1295l8 205"/>
                    <path class="y4" d="M497 60v95h15v-95M520 60v110M538 58l14 620M525 172v100M790 420l5 165 40-15M795 565l40-8M1428 0v95M1427 90l-8 305M1420 590l-10 280M1413 940l-10 400M432 850l8 95h12v-95M460 845l8 95M462 940v110M475 920l15 510M1300 1020l-8 410M645 1450v60M665 1440v70"/>
                    <path class="y7" d="M835 20l5 590M965 8l3 560M1285-20l-3 450M1190 550l-5 450M1278 520l-5 430M868 680l5 520M795 1360v140M1003 1200v300M1433 455v70M1418 935v65"/>
                    <path class="y9" d="M1167 0v490M1297 1030l-5 400M732 730l8 560M1114 1150v350"/>
                    <path class="y14" d="M1042 610v520"/>
                    <path class="white" d="M530 708v26M541 704v28M465 1465v28M478 1458v30M508 70v70M560 695L830 610M1110 530L1400 425M500 1440L730 1310M900 1215L1270 995"/>
                    <path class="thin" d="M533 148h6M470 930h6"/>
                </g>

                <!-- attic storey -->
                <g transform="translate(1780 370) scale(.7525 .3333)">
                    <path fill="url(#wall)" d="M327 80l128 150 25 470 15 590-265-40-35-745z"/>
                    <path fill="#e8e1c8" d="M598 90l132 130-140-45z"/>
                    <path fill="#9c9c9c" d="M327 80l403 140 130 132-402-122zM598 90l352 132 140 125 230 81 125 107-585-183z"/>
                    <path fill="#d9d8e4" d="M655 112l75 33 48 56-63-23z"/>
                    <path class="thin" d="M728 220l130 130M1088 347l140 120"/>
                    <path fill="#fff" d="M458 240l1004 305-15 670-922 70z"/>
                    <path fill="#e0dddd" d="M460 250l400 130v70L460 340zM1232 480l225 75v35l-225-60zM880 430l345 105v20L880 450z"/>
                    <path fill="#dcdcdc" d="M500 375l180 50-98 203-74-13z"/>
                    <path fill="#e8e0c8" d="M680 425l47 10 3 170-18 5 11 628-126-5-15-605z"/>
                    <path fill="#e9c3bb" d="M765 805h10l6 430h-10z"/>
                    <path fill="#718a89" d="M430 1245l170-20 180 22-250 22zM1170 1220l210-10v15l-210 12zM290 1280l150-25 60 20-200 15z"/>
                    <path class="thin" d="M728 812l47-6M380 710l90-25M252 738l35-7"/>
                    <path class="thin dim" d="M885 817h40"/>
                    <path fill="#fff" d="M373 712l18 0 20 550-18 0zM250 740h20l35 500-25 10z"/>
                    <path fill="#e9e9e9" d="M400 830l95-20 5 445-85 0z"/>
                    <path fill="url(#mesh)" d="M391 705l80-18 25 5v125l-100 20zM270 738h17v112h-12zM1385 830h50v78h-50z"/>
                    <path fill="#fff" d="M405 830h14l14 420h-14zM455 825h8l15 420h-8z"/>
                    <path fill="#ccc" d="M1393 908h40v147h-40z"/>
                    <path fill="#e6e6e6" d="M1383 910h10v287h-14z"/>
                    <path fill="#f4f4f4" d="M1393 1055h118l-3 150-115-5z"/>
                    <path fill="#a0bcbb" d="M30 1250l80-12 180 40-5 15z"/>
                    <path class="glass" d="M20 1042l262-17 8 265-262-42z"/>
                    <path fill="url(#slab)" d="M25 1250l262 45 5 132L30 1353z"/>
                    <path class="teal" d="M25 1250l262 43"/>
                    <path fill="#c4c4c4" d="M290 1295l1218-80v75L290 1420z"/>
                    <path fill="#dedede" d="M770 1312l75 12 140-15v-15zM1270 1268l238-25v35l-80 5z"/>
                    <path class="post" d="M20 1042l10 205M65 1035l12 220M115 1035l12 230M170 1030l13 245M233 1027l13 260M103 1040l10 205M193 1045l10 195"/>
                    <path class="y9" d="M458 243l1004 300M460 310l1000 280M288 1300l1220-80"/>
                    <path class="y5" d="M465 352l980 268M458 235l6 120M1462 545v60M290 1328l1218-75M290 1347l1218-95v40L290 1428v-130M280 1022l8 270M1511 1052l-3 240M507 680l18 595"/>
                    <path class="y4" d="M465 360l25 920M480 362l10 315h20M490 365l10 315M500 368l8 310M498 690l18 585M525 1275v50M492 1275v45M1438 820v395M1455 820l-8 395M1230 485v80"/>
                    <path class="dark" d="M507 690l14 580"/>
                    <path class="y7" d="M877 380v80"/>
                    <path class="y9" d="M872 465l6 800M1037 512v745M1169 548l-4 700"/>
                    <path class="y14" d="M1450 620v200"/>
                    <path class="y9" d="M1436 1300v65"/>
                    <path class="white" d="M503 1285v30M512 1285v30M535 1295L870 1270M1045 1255l120-8"/>
                </g>
            </svg>

            <h2 class="view-title"><svg class="icon-sm"><use href="#i-sphere"/></svg>3D</h2>

            <div class="minimap">
                <button class="map-expand" aria-label="Expand"><svg class="icon-sm"><use href="#i-expand"/></svg></button>
                <span class="map-title">Piano Terzo</span>
                <button class="map-close" aria-label="Close"><svg class="icon-xs"><use href="#i-close"/></svg></button>
                <svg class="plan" viewBox="0 0 100 116">
                    <path class="plan-thick" d="M5 3v98M66 3v98M14 32V4h44v91H14V66"/>
                    <path class="plan-wall" d="M38 4v28M5 33h31M4 33v33h54M21 33v32M22 43h10v22M22 54h10M41 33v20h17M41 39h17M45 53v13"/>
                    <path class="plan-fill" d="M21 58h8v5h-8z"/>
                    <path class="plan-cone" d="M79 103L66 63q-27 8-28 31z"/>
                    <circle class="plan-eye" cx="79" cy="103" r="8.500"/>
                </svg>
            </div>

            <div class="side-tools">
                <button class="mini" aria-label="Collapse view"><svg class="icon-sm"><use href="#i-window"/></svg></button>
                <div class="side-group">
                    <button class="tool on ab">AB</button>
                    <button class="tool" aria-label="Grid"><svg class="icon-md"><use href="#i-grid"/></svg></button>
                    <button class="tool on" aria-label="Spaces"><svg class="icon-lg"><use href="#i-rooms"/></svg></button>
                    <button class="tool" aria-label="Markup"><svg class="icon-lg"><use href="#i-sketch"/></svg></button>
                    <button class="tool" aria-label="Lock"><svg class="icon-md"><use href="#i-lock"/></svg></button>
                </div>
                <input class="slider" type="range" min="0" max="100" value="28" aria-label="Floor height">
                <input class="slider slider-section" type="range" min="0" max="100" value="100" aria-label="Section height">
            </div>
        </main>
    </div>

    <footer class="status">
        <span>Show component properties by clicking.</span>
        <span class="selected-count">Selected: 1</span>
    </footer>
</body>
</html>
```

FILE: styles.css
```css
* {
    margin: 0;
    padding: 0;
    box-sizing: border-box;
}

body {
    font-family: 'Noto Sans', sans-serif;
    font-size: 21px;
    color: #1f252b;
    background: linear-gradient(#f2f2f2 176px, #c9c9c9);
    height: 100vh;
    display: flex;
    flex-direction: column;
    overflow: hidden;
}

button,
input,
select {
    font: inherit;
    color: inherit;
    border: none;
    background: none;
}

button {
    cursor: pointer;
}

svg {
    display: block;
    flex: none;
    fill: none;
    stroke: #3b454e;
    stroke-width: 1;
    stroke-linecap: round;
    stroke-linejoin: round;
}

.sprite {
    position: absolute;
    width: 0;
    height: 0;
}

.solid {
    fill: #333e47;
    stroke: none;
}

.icon { width: 48px; height: 48px; }
.icon-lg { width: 50px; height: 50px; }
.icon-md { width: 46px; height: 46px; }
.icon-sm { width: 24px; height: 24px; stroke-width: 1.5; }
.icon-xs { width: 16px; height: 16px; stroke-width: 2; }
.caret { width: 14px; height: 14px; }

/* header */
.header {
    flex: none;
    display: flex;
    align-items: center;
    height: 103px;
    padding: 0 40px 2px 14px;
    background: #232d45;
    border-bottom: 1px solid #858b96;
}

.logo {
    width: 54px;
    height: 54px;
    stroke: #fff;
}

.nav {
    display: flex;
    gap: 50px;
    margin-left: 50px;
}

.nav-link {
    font-size: 23px;
    line-height: 30px;
    color: #98a5c4;
    text-decoration: none;
    border-bottom: 2px solid transparent;
}

.nav-link.active {
    color: #f5b323;
    border-color: #f5b323;
}

.views {
    margin-left: auto;
}

.help {
    width: 38px;
    height: 38px;
    margin-left: 42px;
    border-radius: 50%;
    background: #e1e4ea;
    color: #0a6cdc;
    font-size: 28px;
    font-weight: 700;
    line-height: 38px;
}

/* toolbar */
.toolbar {
    flex: none;
    display: flex;
    align-items: center;
    height: 75px;
    padding-right: 7px;
    background: #fff;
    border-bottom: 2px solid #c9ced3;
}

.tool {
    flex: none;
    display: flex;
    align-items: center;
    justify-content: center;
    width: 66px;
    height: 66px;
    border-radius: 6px;
}

.tool.on,
.mini.on {
    background: #c1c5ce;
}

.tool-edge {
    width: 59px;
    justify-content: flex-start;
    padding-left: 2px;
}

.tool-text {
    width: auto;
    gap: 8px;
    padding: 0 9px;
}

.tool-text span {
    margin-left: 3px;
}

.tool-menu {
    width: 95px;
    justify-content: flex-start;
    gap: 12px;
    padding-left: 9px;
}

.sep,
.sep-sm {
    flex: none;
    width: 2px;
    height: 58px;
    margin: 0 6px;
    background: #cdd1d6;
}

.sep-sm {
    height: 30px;
    margin: 0 5px 0 6px;
}

.gear-text {
    fill: #3b454e;
    stroke: none;
    font-size: 12px;
}

.search {
    display: flex;
    align-items: center;
    width: 537px;
    height: 48px;
    margin-left: auto;
    padding: 0 14px 0 10px;
    border: 2px solid #949ba3;
    border-radius: 7px;
}

.search input {
    flex: 1;
    outline: none;
}

.search input::placeholder {
    color: #8d949b;
}

/* left panels */
.workspace {
    flex: 1;
    min-height: 0;
    display: flex;
}

.sidebar {
    flex: none;
    display: grid;
    grid-template-rows: 474fr 827fr 424fr;
    gap: 25px;
    width: 1344px;
    padding: 24px 14px 0;
}

.panel {
    display: flex;
    flex-direction: column;
    min-height: 0;
    overflow: hidden;
    background: #fff;
    border: 2px solid #c3c8d0;
}

.panel-header {
    flex: none;
    display: flex;
    align-items: center;
    height: 63px;
    padding: 0 11px 0 13px;
    background: #f9fafa;
}

.panel-title {
    flex: 1;
    margin-left: 10px;
    font-size: 22px;
    font-weight: 400;
}

.mini {
    flex: none;
    display: flex;
    align-items: center;
    justify-content: center;
    width: 38px;
    height: 38px;
    border-radius: 5px;
}

.mini.narrow {
    width: 29px;
}

.mini.off {
    opacity: 0.4;
}

.mini.collapse {
    margin-left: 9px;
}

.green { stroke: #1fcb62; stroke-width: 2; }
.red { stroke: #f03a30; stroke-width: 2; }
.blue { stroke: #0a6cdc; stroke-width: 2; }
.house-box { stroke: #dd7412; stroke-width: 2; }

.sets {
    display: flex;
    align-items: center;
    gap: 8px;
    margin-right: 4px;
}

.sets select {
    appearance: none;
    font-size: 22px;
    color: #adb1b6;
    opacity: 1;
}

.panel-body {
    flex: 1;
    min-height: 0;
    display: flex;
    align-items: stretch;
}

.tree,
.props {
    flex: 1;
    align-self: flex-start;
    width: 100%;
    border-spacing: 0;
    table-layout: fixed;
}

.tree th,
.props th {
    height: 44px;
    font-weight: 400;
    border-bottom: 2px solid #c3c8d0;
}

.tree th + th {
    border-left: 1px solid #c9cdd3;
}

.col-version { width: 105px; }
.col-link { width: 38px; }

.col-link svg {
    margin: auto;
}

.tree td,
.props td {
    height: 38px;
    line-height: 28px;
    white-space: nowrap;
    overflow: hidden;
}

.tree tr:nth-child(even) td,
.props tr:nth-child(even) td {
    height: 39px;
    background: #f9fafa;
}

.tree .selected td {
    background: #d1e7ff;
}

.node {
    display: flex;
    align-items: center;
    gap: 9px;
    padding-left: 6px;
}

.node .caret {
    margin-right: 7px;
}

.level-1 { padding-left: 38px; }
.level-2 { padding-left: 69px; }
.level-3 { padding-left: 101px; }
.level-4 { padding-left: 132px; }

.scrollbar {
    width: 17px;
    padding: 3px;
    background: #f0f1f1;
}

.scroll-thumb {
    height: 61%;
    border-radius: 6px;
    background: #c1c5ce;
}

/* info */
.info-name {
    flex: none;
    display: flex;
    align-items: center;
    gap: 9px;
    height: 56px;
    padding: 0 0 8px 10px;
    background: #f9fafa;
}

.tabs,
.subtabs {
    flex: none;
    display: flex;
    background: #f9fafa;
}

.tab {
    height: 77px;
    padding: 0 21px;
    background: #e1e4ea;
    border: solid #c3c8d0;
    border-width: 2px 1px 2px 0;
}

.tab-link {
    padding-right: 32px;
    color: #1672dc;
}

.tab:last-child {
    padding-right: 27px;
}

.tab.active {
    background: #eff1f0;
    font-weight: 600;
    box-shadow: inset 0 -5px #0769d8;
}

.subtab {
    height: 56px;
    padding: 0 22px 0 21px;
    background: #fff;
    border-right: 2px solid #c3c8d0;
    font-weight: 600;
    box-shadow: inset 0 -5px #0769d8;
}

.props th + th,
.props td + td {
    border-left: 2px solid #c3c8d0;
}

.props td {
    padding-left: 4px;
}

.props .group {
    padding-left: 6px;
    font-weight: 600;
}

.props .prop {
    padding-left: 71px;
}

.group .caret {
    display: inline-block;
    margin-right: 15px;
}

.bars {
    display: inline-block;
    width: 18px;
    height: 10px;
    margin: 0 12px 4px 0;
    vertical-align: middle;
    border: solid #c3c7ca;
    border-width: 3px 0;
}

/* 3D view */
.viewport {
    flex: 1;
    position: relative;
    display: flex;
    justify-content: space-between;
    min-width: 0;
}

.scene {
    position: absolute;
    inset: 0;
    width: 100%;
    height: 100%;
    stroke: none;
}

.scene path {
    vector-effect: non-scaling-stroke;
}

.scene .y4 { stroke: #ff0; stroke-width: 4px; }
.scene .y5 { stroke: #ff0; stroke-width: 6px; }
.scene .y7 { stroke: #ff0; stroke-width: 8px; }
.scene .y9 { stroke: #ff0; stroke-width: 10px; }
.scene .y14 { stroke: #ff0; stroke-width: 14px; }
.scene .white { stroke: #fffce0; stroke-width: 2px; }
.scene .thin { stroke: #666; stroke-width: 1px; }
.scene .dim { stroke: #999; stroke-dasharray: 4 3; }
.scene .thinw { stroke: #fff; stroke-width: 3px; }
.scene .rust { stroke: #6b5049; stroke-width: 1px; }
.scene .dark { stroke: #6f6f60; stroke-width: 4px; }
.scene .teal { stroke: #9cc4c3; stroke-width: 3px; }
.scene .post { stroke: #f6f6f6; stroke-width: 2px; }
.scene .mark { stroke: #555; stroke-width: 1px; }
.scene .glass { fill: #c4c6c6; opacity: 0.6; }

.view-title {
    position: relative;
    display: flex;
    align-items: center;
    gap: 9px;
    height: 30px;
    margin: 40px 0 0 25px;
    font-size: 22px;
    font-weight: 600;
}

.side-tools {
    position: relative;
    display: flex;
    flex-direction: column;
    align-items: center;
    width: 66px;
    margin-right: 28px;
    padding: 37px 0 26px;
}

.side-tools .mini {
    margin-left: 10px;
}

.side-group {
    display: flex;
    flex-direction: column;
    gap: 9px;
    margin: 33px 0 40px;
}

.ab {
    font-size: 36px;
    font-weight: 400;
    color: #3b454e;
}

.slider {
    flex: 1;
    min-height: 0;
    width: 22px;
    margin-left: 10px;
    appearance: none;
    writing-mode: vertical-lr;
    background: linear-gradient(#bcc3c9, #bcc3c9) center / 3px 100% no-repeat;
}

.slider-section {
    flex-grow: 1.02;
    margin-top: 49px;
}

.slider::-webkit-slider-thumb {
    appearance: none;
    width: 22px;
    height: 22px;
    background: #4695e8;
    clip-path: polygon(0 0, 55% 0, 100% 50%, 55% 100%, 0 100%);
}

.minimap {
    position: absolute;
    right: 105px;
    bottom: 5px;
    width: 175px;
    height: 175px;
    background: #d6d6d6;
    border: 2px solid #e6e6e6;
    border-width: 2px 1px 1px 2px;
}

.map-title {
    position: absolute;
    top: 5px;
    left: 45px;
    line-height: 28px;
    color: #000;
}

.map-expand {
    position: absolute;
    top: 0;
    left: 0;
}

.map-close {
    position: absolute;
    top: 4px;
    right: 4px;
}

.plan {
    position: absolute;
    top: 28px;
    left: 52px;
    width: 100px;
    height: 116px;
}

.plan-thick { stroke: #111; stroke-width: 2.5; stroke-linecap: butt; }
.plan-wall { stroke: #111; stroke-width: 1.5; }
.plan-fill { fill: #000; }
.plan-cone { fill: #fbb615; opacity: 0.7; stroke: none; }
.plan-eye { fill: #ffb000; stroke: #222; stroke-width: 1.5; }

/* status bar */
.status {
    flex: none;
    display: flex;
    justify-content: space-between;
    height: 50px;
    padding: 14px 308px 0 26px;
    line-height: 28px;
    color: #111;
}
```
